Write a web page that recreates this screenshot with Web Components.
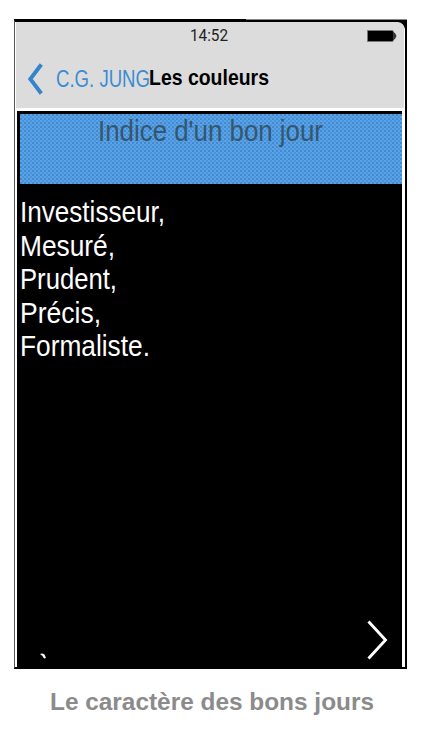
<!DOCTYPE html>
<html lang="fr">
<head>
<meta charset="utf-8">
<title>Les couleurs</title>
<style>
body { margin: 0; background: #fff; font-family: "Liberation Sans", Arial, sans-serif; }
</style>
</head>
<body>
<jung-page></jung-page>
<script>
// Text squeezed horizontally to a given width.
class FitText extends HTMLElement {
  connectedCallback() {
    const w = +this.getAttribute('w');
    this.attachShadow({mode: 'open'}).innerHTML = `
      <style>
        :host { display: block; flex: none; width: ${w}px; white-space: nowrap; }
        span { display: inline-block; transform-origin: 0 50%; }
      </style><span><slot></slot></span>`;
    const s = this.shadowRoot.querySelector('span');
    s.style.transform = `scaleX(${w / s.getBoundingClientRect().width})`;
  }
}

class StatusBar extends HTMLElement {
  connectedCallback() {
    this.attachShadow({mode: 'open'}).innerHTML = `
      <style>
        :host { display: grid; grid-template-columns: 1fr auto 1fr; align-items: center; height: 28px; padding: 0 7px 0 0; font: 16px/28px Roboto, sans-serif; color: #222; }
        fit-text { grid-column: 2; margin-left: 4px; }
        svg { justify-self: end; display: block; margin-top: -1px; }
      </style>
      <fit-text w="38">14:52</fit-text>
      <svg width="31" height="14" viewBox="0 0 31 14"><path d="M1.500 1.500h25l1.500 2v7l-1.500 2h-25z" fill="#000" stroke="#777"/><path d="M28 4h1l1.500 3-1.500 3h-1z" fill="#333"/></svg>`;
  }
}

class NavBar extends HTMLElement {
  connectedCallback() {
    this.attachShadow({mode: 'open'}).innerHTML = `
      <style>
        :host { display: flex; align-items: center; height: 58px; padding-left: 10px; }
        svg { display: block; margin-right: 12px; }
        .back { font-size: 23px; color: #3b8cd3; }
        .title { font-size: 22px; font-weight: bold; color: #000; padding-bottom: 2px; margin-left: -1px; }
      </style>
      <svg width="18" height="34" viewBox="0 0 18 34"><path d="M15.300 2.500 4.300 17l11 14.500" fill="none" stroke="#3484cb" stroke-width="3.900"/></svg>
      <fit-text class="back" w="94">C.G. JUNG</fit-text>
      <fit-text class="title" w="120">Les couleurs</fit-text>`;
  }
}

class DayBanner extends HTMLElement {
  connectedCallback() {
    this.attachShadow({mode: 'open'}).innerHTML = `
      <style>
        :host { display: flex; justify-content: center; box-sizing: border-box; height: 70px; font-size: 29px; line-height: 35px; color: #35566f;
          background:
            radial-gradient(circle at 1px 1px, #4388c8 0.8px, transparent 1px) 0 0 / 4px 4px,
            radial-gradient(circle at 1px 1px, #4c94da 0.8px, transparent 1px) 2px 2px / 4px 4px,
            #58a3e9; }
        fit-text { margin-right: 2px; }
      </style>
      <fit-text w="225"><slot></slot></fit-text>`;
  }
}

class TraitList extends HTMLElement {
  connectedCallback() {
    const rows = [['Investisseur,', 145], ['Mesuré,', 95], ['Prudent,', 97], ['Précis,', 81], ['Formaliste.', 130]];
    this.attachShadow({mode: 'open'}).innerHTML = `
      <style>:host { display: block; padding-top: 12px; font-size: 29px; line-height: 33.5px; color: #fff; }
      fit-text { height: 33.5px; }</style>
      ${rows.map(([t, w]) => `<fit-text w="${w}">${t}</fit-text>`).join('')}`;
  }
}

class PhoneFrame extends HTMLElement {
  connectedCallback() {
    this.attachShadow({mode: 'open'}).innerHTML = `
      <style>
        :host { display: flex; flex-direction: column; box-sizing: border-box; width: 393px; height: 650px; border: solid #000; border-width: 3px 2px 2px 1px; border-left-color: #555; background: #fff; position: relative; }
        header { background: #dcdcdc; height: 86px; margin: 0 1px; }
        .corner { position: absolute; right: 0; top: 0; }
        .edge { position: absolute; right: -2px; top: -3px; }
        main { flex: 1; box-sizing: border-box; margin: 3px 3px 0 2px; padding: 3px 0 6px 3px; background: #000; display: flex; flex-direction: column; }
        footer { margin-top: auto; display: flex; justify-content: space-between; align-items: flex-end; padding: 0 13px 0 20px; }
        svg { display: block; }
      </style>
      <header><status-bar></status-bar><nav-bar></nav-bar></header>
      <main>
        <day-banner>Indice d'un bon jour</day-banner>
        <trait-list></trait-list>
        <footer>
          <svg width="8" height="8" viewBox="0 0 8 8"><path d="M0 1Q2 0 4.500 1.500L6 5 4 5.500 2.500 3z" fill="#fff"/></svg>
          <svg width="24" height="42" viewBox="0 0 24 42"><path d="M3.500 2.500 20.500 21 3.500 39.500" fill="none" stroke="#fff" stroke-width="2.900"/></svg>
        </footer>
      </main>
      <svg class="corner" width="7" height="7"><path d="M0 0H7V7Q6 1 0 0z"/></svg>
      <svg class="edge" width="161" height="1"><path d="M0 0H161V1H0z" fill="#888"/></svg>`;
  }
}

class JungPage extends HTMLElement {
  connectedCallback() {
    this.attachShadow({mode: 'open'}).innerHTML = `
      <style>
        :host { display: flex; flex-direction: column; height: 750px; box-sizing: border-box; padding: 19px 0 0 14px; overflow: hidden; }
        .caption { margin: 16px 0 0 36px; font-size: 24px; line-height: 33px; font-weight: bold; color: #8b8b8b; }
      </style>
      <phone-frame></phone-frame>
      <fit-text class="caption" w="324">Le caractère des bons jours</fit-text>`;
  }
}

customElements.define('fit-text', FitText);
customElements.define('status-bar', StatusBar);
customElements.define('nav-bar', NavBar);
customElements.define('day-banner', DayBanner);
customElements.define('trait-list', TraitList);
customElements.define('phone-frame', PhoneFrame);
customElements.define('jung-page', JungPage);
</script>
</body>
</html>
